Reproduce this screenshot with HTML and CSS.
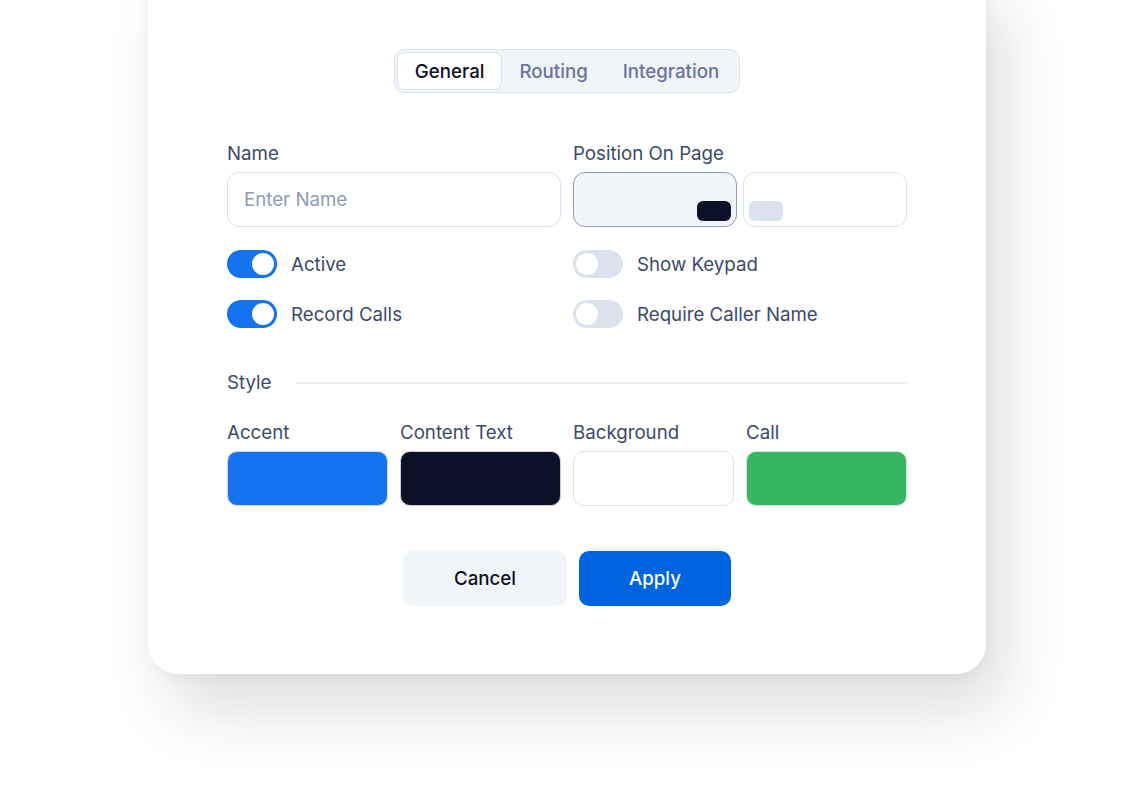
FILE: index.html
```html
<!DOCTYPE html>
<html lang="en">
<head>
<meta charset="utf-8">
<title>Widget Settings</title>
<link rel="stylesheet" href="styles.css">
</head>
<body>
<div class="stage">
  <div class="card">
    <div class="tabs-wrap">
      <div class="tabs">
        <div class="tab active">General</div>
        <div class="tab">Routing</div>
        <div class="tab">Integration</div>
      </div>
    </div>

    <div class="grid2">
      <div class="field">
        <div class="label">Name</div>
        <div class="input"><span class="placeholder">Enter Name</span></div>
      </div>
      <div class="field">
        <div class="label">Position On Page</div>
        <div class="pos-row">
          <div class="pos selected"><span class="pos-mark dark"></span></div>
          <div class="pos left"><span class="pos-mark light"></span></div>
        </div>
      </div>
    </div>

    <div class="grid2 toggles">
      <div class="toggle-col">
        <div class="toggle-row"><span class="switch on"><span class="knob"></span></span><span class="toggle-label">Active</span></div>
        <div class="toggle-row"><span class="switch on"><span class="knob"></span></span><span class="toggle-label">Record Calls</span></div>
      </div>
      <div class="toggle-col">
        <div class="toggle-row"><span class="switch"><span class="knob"></span></span><span class="toggle-label">Show Keypad</span></div>
        <div class="toggle-row"><span class="switch"><span class="knob"></span></span><span class="toggle-label">Require Caller Name</span></div>
      </div>
    </div>

    <div class="section">
      <span class="section-title">Style</span>
      <span class="section-line"></span>
    </div>

    <div class="colors">
      <div class="field">
        <div class="label">Accent</div>
        <div class="swatch accent"></div>
      </div>
      <div class="field">
        <div class="label">Content Text</div>
        <div class="swatch content"></div>
      </div>
      <div class="field">
        <div class="label">Background</div>
        <div class="swatch background"></div>
      </div>
      <div class="field">
        <div class="label">Call</div>
        <div class="swatch call"></div>
      </div>
    </div>

    <div class="actions">
      <button class="btn cancel">Cancel</button>
      <button class="btn apply">Apply</button>
    </div>
  </div>
</div>
</body>
</html>
```

FILE: styles.css
```css
* { box-sizing: border-box; }
html, body {
  margin: 0;
  padding: 0;
  background: #ffffff;
  overflow: hidden;
}
body {
  font-family: Inter, "Noto Sans", "Liberation Sans", sans-serif;
  color: #3b4a6a;
  width: 1122px;
  height: 788px;
}
.stage {
  padding-left: 148px;
}
.card {
  width: 838px;
  margin-top: -40px;
  padding: 89px 79px 68px;
  background: #ffffff;
  border-radius: 30px;
  box-shadow: 20px 38px 64px rgba(20, 25, 40, 0.14), 0 4px 14px rgba(20, 25, 40, 0.04);
}
.tabs-wrap {
  display: flex;
  justify-content: center;
}
.tabs {
  display: flex;
  padding: 2px;
  background: #f1f4f9;
  border: 1px solid #dbe2ee;
  border-radius: 10px;
  height: 44px;
}
.tab {
  display: flex;
  align-items: center;
  padding: 1px 17.5px 0;
  font-size: 18.7px;
  font-weight: 500;
  color: #67759a;
  border-radius: 8px;
}
.tab.active {
  background: #ffffff;
  color: #0b1126;
  border: 1px solid #dbe2ee;
  padding: 1px 16.5px 0;
}
.grid2 {
  display: grid;
  grid-template-columns: 1fr 1fr;
  column-gap: 12px;
  margin-top: 49px;
}
.field {
  display: flex;
  flex-direction: column;
}
.label {
  font-size: 18.7px;
  line-height: 23px;
  color: #3b4a6a;
  margin-bottom: 7px;
}
.input {
  height: 55px;
  border: 1px solid #dce3ef;
  border-radius: 12px;
  display: flex;
  align-items: center;
  padding-left: 16px;
}
.placeholder {
  font-size: 18.7px;
  color: #8e9ab6;
}
.pos-row {
  display: flex;
  gap: 6px;
}
.pos {
  flex: 1;
  height: 55px;
  border-radius: 12px;
  border: 1px solid #dce3ef;
  display: flex;
  align-items: flex-end;
  padding: 5px;
}
.pos.selected {
  background: #f1f4f9;
  border-color: #8b98b7;
  justify-content: flex-end;
}
.pos.left {
  justify-content: flex-start;
}
.pos-mark {
  width: 34px;
  height: 20px;
  border-radius: 6px;
}
.pos-mark.dark { background: #0b1126; }
.pos-mark.light { background: #dbe2ee; }
.toggles {
  margin-top: 23px;
}
.toggle-col {
  display: flex;
  flex-direction: column;
  gap: 22px;
}
.toggle-row {
  display: flex;
  align-items: center;
  gap: 14px;
  height: 28px;
}
.switch {
  width: 50px;
  height: 28px;
  border-radius: 14px;
  background: #dbe2ee;
  padding: 3px;
  display: flex;
  justify-content: flex-start;
}
.switch.on {
  background: #1573ef;
  justify-content: flex-end;
}
.knob {
  width: 22px;
  height: 22px;
  border-radius: 50%;
  background: #ffffff;
}
.toggle-label {
  font-size: 18.7px;
  color: #3b4a6a;
}
.section {
  display: flex;
  align-items: center;
  gap: 24px;
  margin-top: 43px;
}
.section-title {
  font-size: 18.7px;
  color: #3b4a6a;
}
.section-line {
  flex: 1;
  height: 2px;
  background: #edf1f7;
}
.colors {
  display: grid;
  grid-template-columns: repeat(4, 1fr);
  column-gap: 12px;
  margin-top: 27px;
}
.swatch {
  height: 55px;
  border-radius: 10px;
  border: 1px solid #dce3ef;
}
.swatch.accent { background: #1573ef; border-color: #d3dcef; }
.swatch.content { background: #0b1126; border-color: #c9d0de; }
.swatch.background { background: #ffffff; }
.swatch.call { background: #36b663; border-color: #d3e6da; }
.actions {
  display: flex;
  justify-content: center;
  gap: 12px;
  margin-top: 45px;
}
.btn {
  height: 55px;
  border: none;
  border-radius: 10px;
  font-family: inherit;
  font-size: 18.7px;
  font-weight: 500;
}
.btn.cancel {
  width: 164px;
  background: #f1f4f9;
  color: #0b1126;
}
.btn.apply {
  width: 152px;
  background: #0064e1;
  color: #ffffff;
}
```
